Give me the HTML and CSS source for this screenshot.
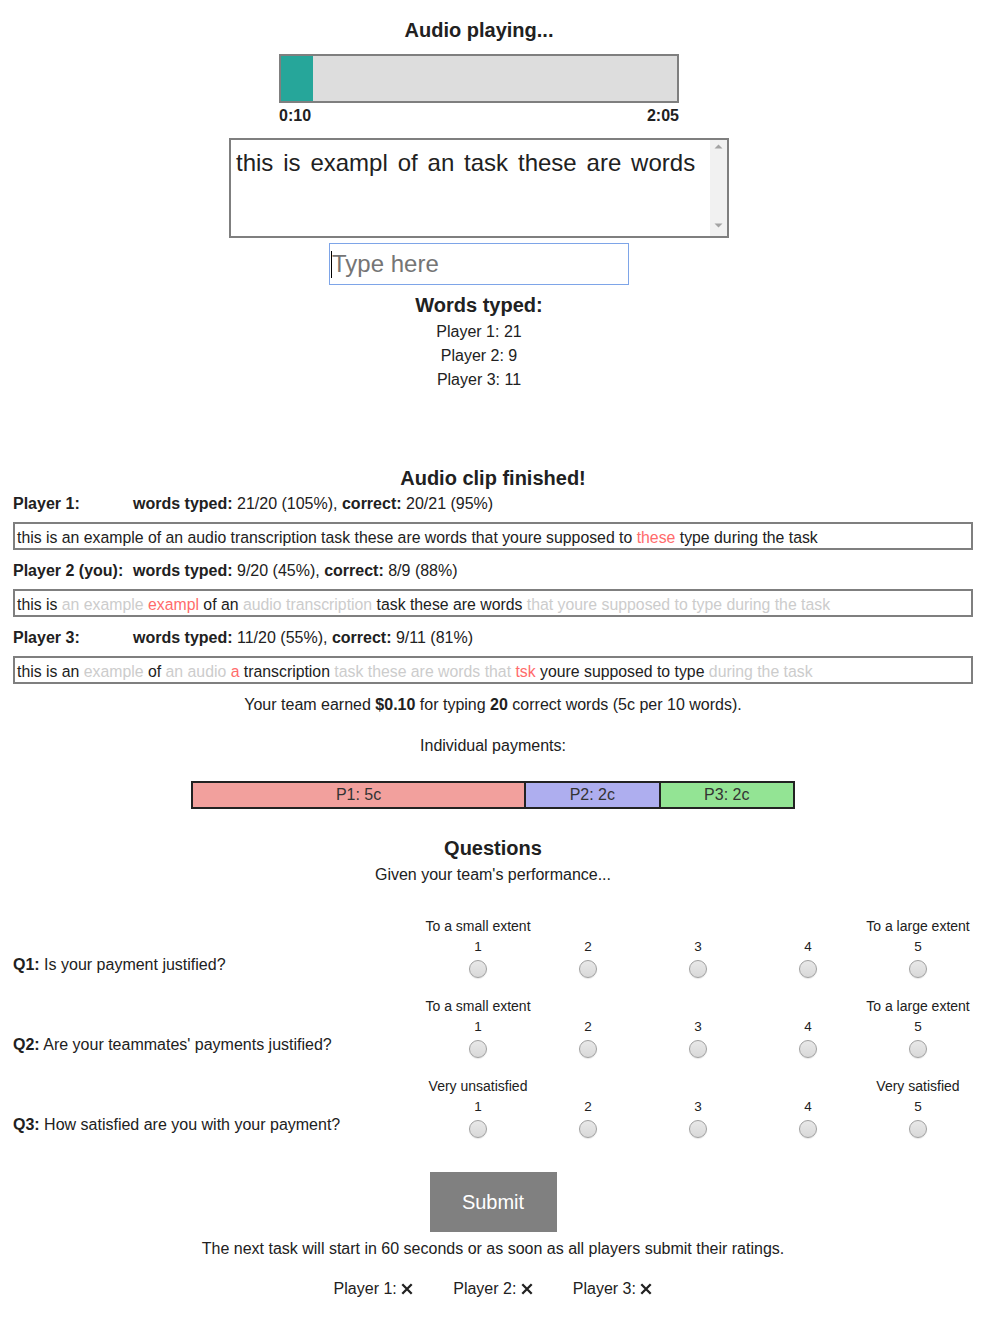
FILE: index.html
```html
<!DOCTYPE html>
<html lang="en">
<head>
<meta charset="utf-8">
<title>Audio transcription task</title>
<link rel="stylesheet" href="styles.css">
</head>
<body>
<section class="live">
  <h2 class="title">Audio playing...</h2>
  <div class="progress"><div class="progress-fill" style="width:8%"></div></div>
  <div class="times"><span>0:10</span><span>2:05</span></div>
  <div class="transcript">
    <div class="transcript-text">this is exampl of an task these are words</div>
    <div class="scrollbar">
      <svg class="arrow" width="9" height="5" viewBox="0 0 9 5"><path d="M0.5 4.5 L4.5 0.5 L8.5 4.5 Z" fill="#a3a3a3"/></svg>
      <svg class="arrow" width="9" height="5" viewBox="0 0 9 5"><path d="M0.5 0.5 L4.5 4.5 L8.5 0.5 Z" fill="#a3a3a3"/></svg>
    </div>
  </div>
  <div class="type-wrap"><input class="type-input" type="text" placeholder="Type here"></div>
  <h2 class="title words-title">Words typed:</h2>
  <ul class="counts">
    <li>Player 1: 21</li>
    <li>Player 2: 9</li>
    <li>Player 3: 11</li>
  </ul>
</section>

<section class="results">
  <h2 class="title finished-title">Audio clip finished!</h2>

  <div class="player-row"><b class="player-name">Player 1:</b><span><b>words typed:</b> 21/20 (105%), <b>correct:</b> 20/21 (95%)</span></div>
  <div class="answer">this is an example of an audio transcription task these are words that youre supposed to <span class="wrong">these</span> type during the task</div>

  <div class="player-row"><b class="player-name">Player 2 (you):</b><span><b>words typed:</b> 9/20 (45%), <b>correct:</b> 8/9 (88%)</span></div>
  <div class="answer">this is <span class="missed">an example</span> <span class="wrong">exampl</span> of an <span class="missed">audio transcription</span> task these are words <span class="missed">that youre supposed to type during the task</span></div>

  <div class="player-row"><b class="player-name">Player 3:</b><span><b>words typed:</b> 11/20 (55%), <b>correct:</b> 9/11 (81%)</span></div>
  <div class="answer">this is an <span class="missed">example</span> of <span class="missed">an audio</span> <span class="wrong">a</span> transcription <span class="missed">task these are words that</span> <span class="wrong">tsk</span> youre supposed to type <span class="missed">during the task</span></div>

  <p class="earned">Your team earned <b>$0.10</b> for typing <b>20</b> correct words (5c per 10 words).</p>
  <p class="individual">Individual payments:</p>
  <div class="pay-bar">
    <div class="pay pay-1" style="flex-grow:5">P1: 5c</div>
    <div class="pay pay-2" style="flex-grow:2">P2: 2c</div>
    <div class="pay pay-3" style="flex-grow:2">P3: 2c</div>
  </div>

  <h2 class="title questions-title">Questions</h2>
  <p class="subtitle">Given your team's performance...</p>

  <div class="question">
    <div class="q-label"><b>Q1:</b> Is your payment justified?</div>
    <label class="opt"><span class="extent">To a small extent</span><span class="num">1</span><input class="radio" type="radio" name="q1"></label>
    <label class="opt"><span class="extent"></span><span class="num">2</span><input class="radio" type="radio" name="q1"></label>
    <label class="opt"><span class="extent"></span><span class="num">3</span><input class="radio" type="radio" name="q1"></label>
    <label class="opt"><span class="extent"></span><span class="num">4</span><input class="radio" type="radio" name="q1"></label>
    <label class="opt"><span class="extent">To a large extent</span><span class="num">5</span><input class="radio" type="radio" name="q1"></label>
  </div>
  <div class="question">
    <div class="q-label"><b>Q2:</b> Are your teammates' payments justified?</div>
    <label class="opt"><span class="extent">To a small extent</span><span class="num">1</span><input class="radio" type="radio" name="q2"></label>
    <label class="opt"><span class="extent"></span><span class="num">2</span><input class="radio" type="radio" name="q2"></label>
    <label class="opt"><span class="extent"></span><span class="num">3</span><input class="radio" type="radio" name="q2"></label>
    <label class="opt"><span class="extent"></span><span class="num">4</span><input class="radio" type="radio" name="q2"></label>
    <label class="opt"><span class="extent">To a large extent</span><span class="num">5</span><input class="radio" type="radio" name="q2"></label>
  </div>
  <div class="question">
    <div class="q-label"><b>Q3:</b> How satisfied are you with your payment?</div>
    <label class="opt"><span class="extent">Very unsatisfied</span><span class="num">1</span><input class="radio" type="radio" name="q3"></label>
    <label class="opt"><span class="extent"></span><span class="num">2</span><input class="radio" type="radio" name="q3"></label>
    <label class="opt"><span class="extent"></span><span class="num">3</span><input class="radio" type="radio" name="q3"></label>
    <label class="opt"><span class="extent"></span><span class="num">4</span><input class="radio" type="radio" name="q3"></label>
    <label class="opt"><span class="extent">Very satisfied</span><span class="num">5</span><input class="radio" type="radio" name="q3"></label>
  </div>

  <div class="submit-row"><button class="submit" type="button">Submit</button></div>
  <p class="next-note">The next task will start in 60 seconds or as soon as all players submit their ratings.</p>
  <ul class="status">
    <li>Player 1: <svg class="x" width="12" height="12" viewBox="0 0 12 12"><path d="M1.3 1.3 L10.7 10.7 M10.7 1.3 L1.3 10.7" stroke="#222" stroke-width="2.3" fill="none"/></svg></li>
    <li>Player 2: <svg class="x" width="12" height="12" viewBox="0 0 12 12"><path d="M1.3 1.3 L10.7 10.7 M10.7 1.3 L1.3 10.7" stroke="#222" stroke-width="2.3" fill="none"/></svg></li>
    <li>Player 3: <svg class="x" width="12" height="12" viewBox="0 0 12 12"><path d="M1.3 1.3 L10.7 10.7 M10.7 1.3 L1.3 10.7" stroke="#222" stroke-width="2.3" fill="none"/></svg></li>
  </ul>
</section>
</body>
</html>
```

FILE: styles.css
```css
* { box-sizing: border-box; }

body {
  margin: 0;
  font-family: "Liberation Sans", Arial, sans-serif;
  font-size: 16px;
  line-height: 20px;
  color: #212121;
  background: #fff;
}

.title {
  margin: 0;
  font-size: 20px;
  line-height: 24px;
  font-weight: bold;
  text-align: center;
}

/* ---------- live section ---------- */
.live {
  width: 958px;
  display: flex;
  flex-direction: column;
  align-items: center;
  padding-top: 18px;
}

.progress {
  margin-top: 12px;
  width: 400px;
  height: 49px;
  border: 2px solid #7f7f7f;
  background: #dddddd;
}
.progress-fill {
  height: 100%;
  background: #26a69a;
}

.times {
  margin-top: 3px;
  width: 400px;
  display: flex;
  justify-content: space-between;
  font-weight: bold;
  font-size: 16px;
  line-height: 20px;
}

.transcript {
  margin-top: 12px;
  width: 500px;
  height: 100px;
  border: 2px solid #7f7f7f;
  display: flex;
}
.transcript-text {
  flex: 1;
  padding: 9px 5px 8px;
  font-size: 24px;
  line-height: 28px;
  word-spacing: 3.2px;
  white-space: nowrap;
  overflow: hidden;
}
.scrollbar {
  width: 17px;
  background: #f1f1f1;
  display: flex;
  flex-direction: column;
  justify-content: space-between;
  align-items: center;
  padding: 4px 0 8px;
}
.arrow { display: block; }

.type-wrap {
  position: relative;
  margin-top: 5px;
}
.type-wrap::after {
  content: "";
  position: absolute;
  left: 2px;
  top: 8px;
  width: 1px;
  height: 27px;
  background: #000;
}
.type-input {
  display: block;
  width: 300px;
  height: 42px;
  border: 1px solid #7ea5e8;
  outline: none;
  padding: 0 2px;
  font-family: "Liberation Sans", Arial, sans-serif;
  font-size: 24px;
  line-height: 28px;
  color: #212121;
}
.type-input::placeholder { color: #757575; }

.words-title { margin-top: 8px; }

.counts {
  list-style: none;
  margin: 3px 0 0;
  padding: 0;
  text-align: center;
  line-height: 24px;
}

/* ---------- results ---------- */
.results {
  width: 960px;
  margin-left: 13px;
}

.finished-title { margin-top: 74px; }

.player-row {
  display: grid;
  grid-template-columns: 120px 1fr;
  margin-top: 11px;
}
.finished-title + .player-row { margin-top: 4px; }

.answer {
  margin-top: 8px;
  height: 28px;
  border: 2px solid #7f7f7f;
  padding: 4px 2px 0;
  font-size: 15.82px;
  line-height: 20px;
  white-space: nowrap;
  overflow: hidden;
}
.missed { color: #cccccc; }
.wrong { color: #ff6b6b; }

.earned {
  margin: 11px 0 0;
  text-align: center;
}
.individual {
  margin: 21px 0 0;
  text-align: center;
}

.pay-bar {
  margin: 25px auto 0;
  width: 604px;
  height: 28px;
  border: 2px solid #222;
  display: flex;
}
.pay {
  flex-basis: 0;
  display: flex;
  align-items: center;
  justify-content: center;
  color: #333;
  border-right: 2px solid #222;
}
.pay:last-child { border-right: none; }
.pay-1 { background: #f2a09d; }
.pay-2 { background: #aeaeef; }
.pay-3 { background: #93e494; }

.questions-title { margin-top: 27px; }
.subtitle {
  margin: 5px 0 0;
  text-align: center;
}

.question {
  display: grid;
  grid-template-columns: 1fr repeat(5, 110px);
  margin-top: 20px;
}
.subtitle + .question { margin-top: 33px; }

.q-label {
  align-self: end;
  padding-bottom: 3px;
}

.opt {
  display: flex;
  flex-direction: column;
  align-items: center;
}
.extent {
  height: 16px;
  font-size: 14px;
  line-height: 16px;
  white-space: nowrap;
}
.num {
  margin-top: 3px;
  font-size: 13.5px;
  line-height: 20px;
}
.radio {
  -webkit-appearance: none;
  appearance: none;
  margin: 3px 0 0;
  width: 18px;
  height: 18px;
  border-radius: 50%;
  border: 1.6px solid #a0a0a0;
  background: linear-gradient(#e8e8e8, #d9d9d9);
  box-shadow: 0 1px 1px rgba(0, 0, 0, 0.1);
}

.submit-row {
  margin-top: 34px;
  display: flex;
  justify-content: center;
}
.submit {
  border: none;
  background: #808080;
  color: #fff;
  font-family: "Liberation Sans", Arial, sans-serif;
  font-size: 20px;
  line-height: 24px;
  padding: 18px 32px;
  width: 127px;
}

.next-note {
  margin: 7px 0 0;
  text-align: center;
}

.status {
  list-style: none;
  margin: 20px 0 0;
  padding: 0;
  display: flex;
  justify-content: center;
  gap: 40px;
}
.x {
  vertical-align: -1px;
}
```
